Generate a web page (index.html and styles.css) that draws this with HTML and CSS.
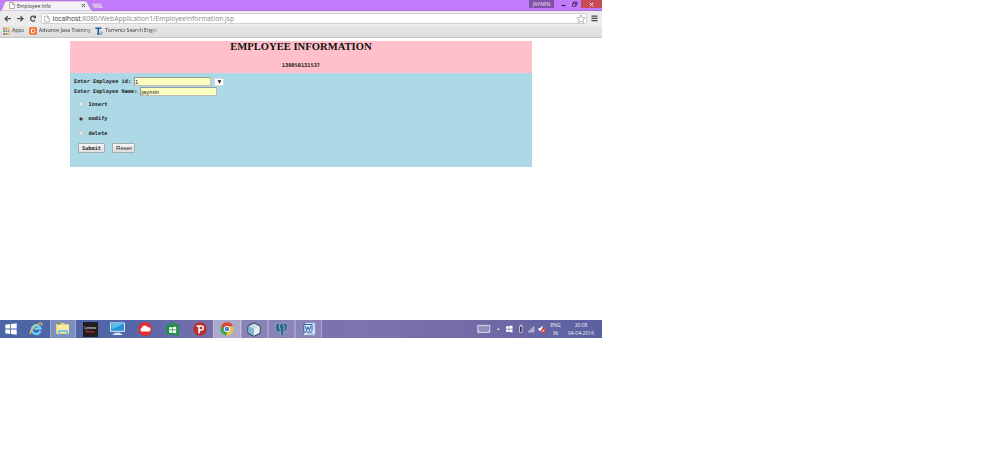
FILE: index.html
```html
<!DOCTYPE html>
<html lang="en">
<head>
<meta charset="utf-8">
<title>Employee Info</title>
<link rel="stylesheet" href="styles.css">
</head>
<body>
<div class="desktop">
  <header class="titlebar">
    <div class="tab">
      <svg class="tab-shape" width="105" height="11" viewBox="0 0 105 11"><path d="M0 11C3 11 3 1 7 1H85C89 1 89 11 94 11Z" fill="#f3f1f4" stroke="#a06bc4" stroke-width=".6"/><path d="M91 3H101L104 8.500H94Z" fill="#d8b5f0" stroke="#ad74d6" stroke-width=".6"/></svg>
      <div class="tab-content">
        <svg class="page-icon" width="6" height="7" viewBox="0 0 6 7"><path d="M.7.5h3l1.6 1.6v4.4H.7zM3.5.5v2h2" fill="#fff" stroke="#888" stroke-width=".7"/></svg>
        <span>Employee Info</span>
        <svg class="tab-close" width="5" height="5" viewBox="0 0 5 5"><path d="m.8.8 3.4 3.4m0-3.4L.8 4.2" stroke="#555" stroke-width="1"/></svg>
      </div>
    </div>
    <div class="user">JAYMIN</div>
    <svg class="window-buttons" width="26" height="8" viewBox="0 0 26 8"><path d="M6.500 5.500h4" stroke="#39204f" stroke-width="1.2"/><path d="M17.500 3.500h3.3v2.8h-3.3zM18.500 3.2V2h3.400v3h-1" fill="none" stroke="#39204f" stroke-width=".8"/></svg>
    <div class="window-close"><svg width="5" height="5" viewBox="0 0 5 5"><path d="m.8.8 3.4 3.4m0-3.4L.8 4.2" stroke="#fff" stroke-width=".9"/></svg></div>
  </header>
  <nav class="toolbar">
    <svg class="nav-icons" width="43" height="14" viewBox="0 0 43 14"><g fill="none" stroke="#505050" stroke-width="1.3"><path d="M11 6.700H5m2.7-2.5L5 6.700l2.7 2.5M17 6.700h6m-2.7-2.5L23 6.700l-2.7 2.5M35 8.300a2.5 2.5 0 1 1-.2-3.5"/></g><path d="M36 3.200v3h-3z" fill="#505050"/></svg>
    <div class="address">
      <svg class="page-icon" width="6" height="8" viewBox="0 0 6 7"><path d="M.7.5h3l1.6 1.6v4.4H.7zM3.5.5v2h2" fill="#fff" stroke="#888" stroke-width=".6"/></svg>
      <span class="url"><b>localhost</b>:8080/WebApplication1/EmployeeInformation.jsp</span>
      <svg class="star" width="10" height="10" viewBox="0 0 10 10"><path d="m5 .8 1.200 2.8 3 .3L7 5.900l.7 3L5 7.300 2.300 8.900l.7-3L.8 3.900l3-.3z" fill="#fff" stroke="#999" stroke-width=".7"/></svg>
    </div>
    <svg class="menu" width="7" height="7" viewBox="0 0 7 7"><path d="M.5 1.200h6M.5 3.400h6M.5 5.600h6" stroke="#444" stroke-width="1.2"/></svg>
  </nav>
  <div class="bookmarks">
    <svg width="8" height="8" viewBox="0 0 8 8"><path d="M1.300.7H3v1.700H1.300zM1.300 6H3v1.700H1.300z" fill="#e84d3d"/><path d="M3.700.7h1.600v1.700H3.700zM6 3.300h1.600V5H6z" fill="#e9823c"/><path d="M1.300 3.300H3V5H1.300zM3.700 6h1.600v1.700H3.700z" fill="#36a853"/><path d="M3.700 3.300h1.600V5H3.700z" fill="#4285f4"/><path d="M6 .7h1.600v1.700H6zM6 6h1.600v1.700H6z" fill="#f4b82b"/></svg>
    <span class="bm apps">Apps</span>
    <svg width="8" height="8" viewBox="0 0 8 8"><rect x=".2" y=".2" width="7.600" height="7.600" rx="1" fill="#f36b21"/><path d="M2.500 2.200h2a.8.8 0 0 1 .8 1.300c1 .3.8 2.300-.6 2.300H2.500z" fill="none" stroke="#fff" stroke-width="1"/></svg>
    <span class="bm java">Advance Java Training</span>
    <svg width="8" height="8" viewBox="0 0 8 8"><path d="M.3 1.300h6.200M3.300 1v6M2.100 7h2.500" stroke="#235d99" stroke-width="1.600"/><path d="M5.300 5h2L5.400 7.300h2.100" fill="none" stroke="#4884b8" stroke-width=".7"/></svg>
    <span class="bm torrentz">Torrentz Search Engin</span>
  </div>
  <main class="page">
    <section class="heading">
      <h1>EMPLOYEE INFORMATION</h1>
      <p>130050131537</p>
    </section>
    <form class="form">
      <div class="row id-row"><label>Enter Employee id:</label><span class="field">1</span><span class="select"><svg width="5" height="4" viewBox="0 0 5 4"><path d="M.6.300h3.800L2.500 3.500z" fill="#111"/></svg></span></div>
      <div class="row name-row"><label>Enter Employee Name:</label><span class="field">jaymin</span></div>
      <div class="choice"><i class="radio"></i><label>Insert</label></div>
      <div class="choice"><i class="radio on"></i><label>modify</label></div>
      <div class="choice"><i class="radio"></i><label>delete</label></div>
      <div class="actions"><span class="button submit">Submit</span><span class="button reset">Reset</span></div>
    </form>
  </main>
  <footer class="taskbar">
    <div class="task start"><svg width="12" height="12" viewBox="0 0 12 12"><path d="m.3 1.800 4.800-.7v4.500H.3zM5.900 1l5.800-.8v5.400H5.900zM.3 6.400h4.800v4.500l-4.800-.7zM5.900 6.400h5.800v5.400L5.900 11z" fill="#fff"/></svg></div>
    <div class="task"><svg width="14" height="14" viewBox="0 0 16 16"><path d="M13 10.200A5 5 0 1 1 13.100 7.600H6" fill="none" stroke="#69d2fa" stroke-width="2.700"/><path d="M1.700 14C-.2 11.500 6.700 3 12 1.400c3-.9 3.300.5 2.200 2.600" fill="none" stroke="#f5cb45" stroke-width="1.300"/></svg></div>
    <div class="task open explorer"><svg width="16" height="14" viewBox="0 0 16 14"><path d="M1 2h4l1-1h3l1 1h4v10H1z" fill="#edcd70"/><path d="M2 3h12v8H2z" fill="#fbeaa4"/><path d="M3 1h2v2H3z" fill="#68af63"/><path d="M3 13V9q0-1 1-1h8q1 0 1 1v4h-2v-3H5v3z" fill="#75c3e9"/></svg></div>
    <div class="task"><svg width="15" height="15" viewBox="0 0 15 15"><path d="M0 0h15v15H0z" fill="#211e20"/><text x="1.500" y="7" class="lenovo">Lenovo</text><text x="2.500" y="10.500" class="photos">Photos</text></svg></div>
    <div class="task"><svg width="15" height="14" viewBox="0 0 16 14"><path d="M.5.500h15v9H.5z" fill="#2695d5" stroke="#e2f2fa"/><path d="M1.500 1.500h13L4 6.500H1.500z" fill="#55bdea"/><path d="M5 11h6v1h2v1.500H3V12h2z" fill="#d7eef9"/></svg></div>
    <div class="task"><svg width="14" height="14" viewBox="0 0 14 14"><circle cx="7" cy="7" r="6.900" fill="#df3034"/><path d="M3.800 9.500a2 2 0 0 1 0-3.700 3 3 0 0 1 5.700-.5 2.200 2.200 0 1 1 .5 4.200z" fill="#fff"/></svg></div>
    <div class="task"><svg width="13" height="14" viewBox="0 0 13 14"><path d="M.5 3.500 12.500 2v11.500L.5 12z" fill="#139436"/><path d="M4 3V1.500Q6.500-.5 9 1.500v1" fill="none" stroke="#159638"/><path d="m3 5.400 3.100-.4v2.600H3zm3.700-.4 3.500-.4v3H6.700zM3 8.200h3.100v2.700L3 10.500zm3.700 0h3.500v3.100l-3.500-.4z" fill="#fff"/></svg></div>
    <div class="task"><svg width="14" height="14" viewBox="0 0 14 14"><circle cx="7" cy="7" r="6.800" fill="#b7312c"/><path d="M3.500 4h4.800a2 2 0 1 1 0 4H6" fill="none" stroke="#fff" stroke-width="1.500"/><path d="M6 4v7.500" stroke="#fff" stroke-width="1.500"/></svg></div>
    <div class="task open active"><svg width="14" height="14" viewBox="0 0 14 14"><circle cx="7" cy="7" r="6.500" fill="#efc43e"/><path d="M1.200 3.800A6.500 6.500 0 0 1 13 4.300H7L4.400 8.500z" fill="#df4536"/><path d="M1.200 3.800 4.600 8.800 7.500 9.500 6 13.400A6.500 6.500 0 0 1 1.200 3.800" fill="#39a557"/><circle cx="7" cy="7" r="3.100" fill="#fff"/><circle cx="7" cy="7" r="2.300" fill="#4285dc"/></svg></div>
    <div class="task open"><svg width="14" height="15" viewBox="0 0 14 15"><path d="m7 .8 6 3v7.300l-6 3.200-6-3.200V3.800z" fill="#c7deec" stroke="#243954" stroke-width="1"/><path d="m1.500 4 5.500 3v6.500l-5.500-3z" fill="#81b7d8"/><path d="m7 7 5.500-3v6.700L7 13.500z" fill="#e5f0f3"/></svg></div>
    <div class="task open"><svg width="15" height="15" viewBox="0 0 15 15"><path d="M4.500 10C1 11 .4 1.300 3.500 1.200L6 2l3-.9c5.400-.8 5.600 4.500 3 7.300l1 .7-2.500.8L10 8.500 9.300 13c-.4 1.600-2.400 1.500-2.600 0L6.500 9z" fill="#2f6590" stroke="#a9c1d6" stroke-width=".6"/><path d="M5.800 2.500Q4.500 4.500 6.500 8M9 2q2.500 3 .8 6" fill="none" stroke="#c7d8e6" stroke-width=".7"/></svg></div>
    <div class="task open"><svg width="14" height="14" viewBox="0 0 14 14"><path d="M3 .8h10.200v12.400H1.500V11H3z" fill="#f5f9ff" stroke="#6488bb" stroke-width=".8"/><path d="M10.500 3H12M10.500 5H12M10.500 7H12M5 11.700h7" stroke="#7599cb" stroke-width=".8"/><path d="M1.800 2.500h8.200v7.500H1.800z" fill="#dce9fa" stroke="#2d61a9" stroke-width="1"/><path d="m3.300 4 1.200 4.500L6 4.800l1.400 3.700L8.600 4" fill="none" stroke="#2d61a9" stroke-width="1"/></svg></div>
    <div class="tray">
      <svg width="70" height="12" viewBox="0 0 70 12"><rect x=".8" y="2.300" width="12" height="7.200" fill="#a9a6c8" stroke="#e2dff0" stroke-width=".8"/><path d="M2 4.200h10M2 6h10M3 7.800h8" stroke="#625b94" stroke-width=".8" stroke-dasharray="1 .5"/><path d="m19.800 6.800 1.500-1.800 1.500 1.800z" fill="#fff"/><path d="m29 3.500 2.800-.4v2.700H29zm3.300-.5 3.200-.4v3.200h-3.200zM29 6.400h2.800v2.700L29 8.700zm3.300 0h3.200v3.200l-3.200-.5z" fill="#fff"/><path d="M42.500 3.300h2.700v6h-2.700zM43 2h1.700v1.300" fill="#35315b" stroke="#eee" stroke-width=".7"/><path d="m51 9 6-5.500V9z" fill="#aaa4cb" stroke="#e0ddec" stroke-width=".5"/><path d="M61.500 5H63l2.500-2.300v7L63 7.500h-1.500z" fill="#fff"/><circle cx="66.300" cy="7.700" r="2.400" fill="#df3b43"/><path d="m65.300 6.700 2 2m0-2-2 2" stroke="#fff" stroke-width=".7"/></svg>
      <div class="lang"><span>ENG</span><span>IN</span></div>
      <div class="clock"><span>20:08</span><span>04-04-2016</span></div>
    </div>
  </footer>
</div>
</body>
</html>
```
FILE: styles.css
```css
* { box-sizing: border-box; }
body { margin: 0; background: #fff; font-family: "Open Sans", sans-serif; }
svg { display: block; flex: none; }
.desktop { width: 602px; height: 338px; display: flex; flex-direction: column; overflow: hidden; }
.titlebar { height: 11px; flex: none; background: #c17bfb; border-bottom: 1px solid #b06de1; display: flex; align-items: flex-start; }
.tab { display: grid; width: 105px; height: 11px; }
.tab-shape, .tab-content { grid-area: 1 / 1; }
.tab-content { display: flex; align-items: center; padding: 0 0 0 9px; height: 11px; font-size: 5.1px; line-height: 8px; color: #333; white-space: nowrap; }
.tab-content .page-icon { margin-right: 2px; }
.tab-content span { width: 64px; }
.user { width: 25px; height: 8px; margin-left: 424px; background: #8051a8; color: #eee2f7; font-size: 5.2px; line-height: 8px; text-align: center; }
.window-buttons { margin-left: 1px; }
.window-close { width: 21px; height: 8px; background: #c84c55; display: grid; place-items: center; }
.toolbar { height: 15px; flex: none; display: flex; align-items: center; background: #ececec; }
.address { width: 546px; height: 11px; border: 1px solid #d1d1d1; background: #fff; display: flex; align-items: center; border-radius: 1px; }
.nav-icons { margin-right: -2px; }
.address .page-icon { margin: 0 2.5px 0 2px; }
.url { width: 524px; font-size: 6.71px; line-height: 9px; color: #888; white-space: nowrap; }
.url b { font-weight: 400; color: #333; }
.menu { margin-left: 4px; }
.bookmarks { height: 12px; flex: none; background: linear-gradient(#e6e6e6, #dddddd); border-bottom: 1px solid #c7c7c7; display: flex; align-items: center; padding: 0 0 2px 2px; }
.bm { margin-left: 2px; font-size: 5.12px; line-height: 8px; color: #333; white-space: nowrap; }
.apps { width: 17px; }
.java { width: 54px; margin-right: 2px; -webkit-mask-image: linear-gradient(90deg, #000 82%, #0004); }
.torrentz { width: 54px; -webkit-mask-image: linear-gradient(90deg, #000 82%, #0004); }
.page { flex: 1; min-height: 0; background: #fff; padding: 3px 69.8px 0 69.6px; }
.heading { height: 32px; background: #ffc0cb; text-align: center; }
h1 { margin: 0; font: bold 10.6px/12px "Liberation Serif", serif; color: #111; }
.heading p { margin: 7px 0 0; font: bold 5.3px/10px "DejaVu Sans Mono", monospace; color: #222; }
.form { height: 94px; padding: 4px 4px 0 4.4px; background: #add8e6; font: bold 5.28px/9px "DejaVu Sans Mono", monospace; color: #222; }
.row { display: flex; height: 9.6px; align-items: center; }
.id-row { padding-top: .4px; }
.field { width: 77px; height: 9px; margin-left: 3px; background: #faffbd; border: 1px solid #bbb; border-top-color: #999; border-left-color: #999; font: 6.1px/7px "Liberation Sans", sans-serif; }
.select { width: 10px; height: 8px; margin-left: 3px; border: 1px solid #d1d9dc; background: #fff; display: grid; place-items: center; }
.choice { display: flex; align-items: center; height: 14.5px; padding-left: 4px; }
.name-row { margin-bottom: 1px; padding-top: .5px; }
.radio { width: 6px; height: 6px; border: 1px solid #bac4c8; border-radius: 50%; background: #e0e5e7; margin-right: 4.5px; }
.on { background: radial-gradient(circle, #333 42%, #ddd 70%); }
.actions { display: flex; padding: 2.6px 0 0 4px; gap: 7.5px; }
.button { height: 10px; border: 1px solid #a6abad; border-radius: 1px; background: linear-gradient(#f5f5f5, #dedede); text-align: center; line-height: 8px; }
.submit { width: 27px; }
.reset { width: 23px; font: 6.1px/8px "Liberation Sans", sans-serif; }
.taskbar { height: 18px; flex: none; display: flex; background: linear-gradient(90deg, #4965a5 0, #5566a7 22%, #7770ac 34%, #7d74ad 60%, #746ba7 78%, #5960a1 100%); }
.task { width: 27.3px; display: grid; place-items: center; }
.start { width: 22px; }
.open { background: #ffffff20; border-left: 1px solid #ffffff35; border-right: 1px solid #ffffff40; }
.explorer { width: 26px; margin: 0 1px 0 .5px; background: #ffffff45; }
.active { background: #ffffff65; }
.lenovo { font: 3.5px "Liberation Sans", sans-serif; fill: #fff; }
.photos { font: 3px "Liberation Sans", sans-serif; fill: #e64735; }
.tray { display: flex; align-items: center; margin-left: auto; font-size: 5px; line-height: 8px; color: #f1eff7; text-align: center; }
.tray span { display: block; }
.lang { width: 17px; }
.clock { width: 34px; margin-right: 4px; }
```
